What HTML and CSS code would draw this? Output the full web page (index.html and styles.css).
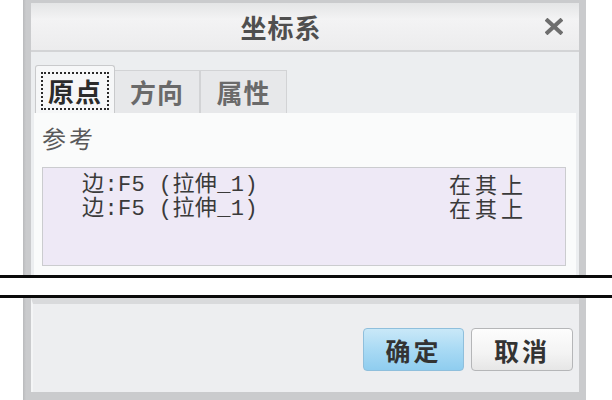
FILE: index.html
```html
<!DOCTYPE html>
<html lang="zh-CN">
<head>
<meta charset="utf-8">
<title>坐标系</title>
<link rel="stylesheet" href="styles.css">
</head>
<body>
  <div class="dlg-top">
    <div class="titlebar">
      <div class="title">坐标系</div>
      <div class="close" aria-label="关闭">
        <svg width="18" height="17" viewBox="0 0 18 17">
          <path d="M2.5 2.5 L15.5 14.5 M15.5 2.5 L2.5 14.5" stroke="#6e6e6e" stroke-width="4" stroke-linecap="square" fill="none"/>
        </svg>
      </div>
    </div>
    <div class="tabarea">
      <div class="tabs">
        <div class="tab tab-active"><span class="focus">原点</span></div>
        <div class="tab tab-2">方向</div>
        <div class="tab tab-3">属性</div>
      </div>
      <div class="panel">
        <div class="label">参考</div>
        <div class="list">
          <div class="row"><span class="ref">边:F5 (拉伸_1)</span><span class="cond">在其上</span></div>
          <div class="row"><span class="ref">边:F5 (拉伸_1)</span><span class="cond">在其上</span></div>
        </div>
      </div>
    </div>
  </div>
  <div class="cut"></div>
  <div class="dlg-bottom">
    <div class="footer">
      <button class="btn btn-ok">确定</button>
      <button class="btn btn-cancel">取消</button>
    </div>
  </div>
</body>
</html>
```
FILE: styles.css
```css
html, body {
  margin: 0;
  padding: 0;
  background: #ffffff;
}
body {
  width: 612px;
  height: 400px;
  overflow: hidden;
  font-family: "Noto Sans CJK SC", sans-serif;
}

.dlg-top {
  margin-left: 23px;
  width: 563px;
  height: 275px;
  box-sizing: border-box;
  padding: 3px 7px 0 8px;
  background: linear-gradient(90deg, #b9babc 0, #cacbcd 3px, #cacbcd 100%);
  overflow: hidden;
}

.titlebar {
  height: 47px;
  display: flex;
  align-items: center;
  background: linear-gradient(#e4e5e6, #f3f3f4 35%, #ececed);
  border-bottom: 2px solid #d3d4d6;
}
.title {
  flex: 1;
  text-align: center;
  padding-right: 14px;
  font-size: 26px;
  font-weight: bold;
  letter-spacing: 1px;
  color: #4f4f4f;
  line-height: 47px;
}
.close {
  width: 18px;
  height: 17px;
  margin-right: 16px;
  display: flex;
}

.tabarea {
  background: #eceef0;
  padding: 13px 3px 0 3px;
}
.tabs {
  display: flex;
  align-items: flex-end;
  margin-left: 1px;
}
.tab {
  box-sizing: border-box;
  font-size: 26px;
  font-weight: bold;
  letter-spacing: 1px;
  text-align: center;
}
.tab-active {
  width: 80px;
  height: 48px;
  padding: 6px 5px 3px 5px;
  background: #f6f7f8;
  border: 1px solid #c9cacc;
  border-bottom: none;
  border-radius: 3px 3px 0 0;
  color: #2b2b2b;
}
.focus {
  display: block;
  border: 2px dotted #2a2a2a;
  line-height: 34px;
  padding: 0 5px;
}
.tab-2, .tab-3 {
  height: 43px;
  line-height: 42px;
  background: #e7e8ea;
  border: 1px solid #d2d3d5;
  border-bottom: none;
  color: #6a6a6a;
}
.tab-2 {
  width: 85px;
  border-left: none;
}
.tab-3 {
  width: 87px;
  border-left: 1px solid #d2d3d5;
}

.panel {
  background: #fafbfb;
  height: 200px;
  padding: 12px 10px 0 8px;
}
.label {
  font-size: 24px;
  line-height: 26px;
  color: #595959;
  letter-spacing: 3px;
}
.list {
  margin-top: 16px;
  height: 99px;
  box-sizing: border-box;
  border: 1px solid #cbcccf;
  background: #eee9f6;
  padding: 6px 38px 0 39px;
}
.row {
  display: flex;
  justify-content: space-between;
  align-items: center;
  height: 24px;
  line-height: 24px;
  color: #3a3a3a;
}
.ref {
  font-family: "Liberation Mono", "Noto Sans CJK SC", monospace;
  font-size: 22px;
  line-height: 24px;
  letter-spacing: 0.4px;
  white-space: pre;
}
.cond {
  font-family: "Liberation Sans", "Noto Sans CJK SC", sans-serif;
  font-size: 22px;
  line-height: 24px;
  letter-spacing: 4px;
}

.cut {
  height: 17px;
  border-top: 3px solid #0a0a0a;
  border-bottom: 3px solid #0a0a0a;
  background: #ffffff;
}

.dlg-bottom {
  margin-left: 23px;
  width: 563px;
  height: 102px;
  box-sizing: border-box;
  padding: 0 7px 8px 8px;
  background: linear-gradient(90deg, #b9babc 0, #cacbcd 3px, #cacbcd 100%);
}
.footer {
  height: 94px;
  box-sizing: border-box;
  border-top: 6px solid #d9dadc;
  border-left: 2px solid #f4f5f6;
  background: #edeef0;
  display: flex;
  justify-content: flex-end;
  align-items: flex-start;
  gap: 7px;
  padding: 24px 6px 0 0;
}
.btn {
  height: 43px;
  box-sizing: border-box;
  border-radius: 4px;
  font-family: "Noto Sans CJK SC", sans-serif;
  font-size: 25px;
  font-weight: bold;
  letter-spacing: 3px;
  color: #333333;
  padding: 0;
  line-height: 40px;
}
.btn-ok {
  width: 101px;
  background: linear-gradient(#c9e8f8, #a9daf4 50%, #8fcdef);
  border: 1px solid #8fbfdc;
}
.btn-cancel {
  width: 102px;
  background: linear-gradient(#fdfdfd, #f3f3f3 60%, #e6e6e6);
  border: 1px solid #b5b6b8;
}
```
